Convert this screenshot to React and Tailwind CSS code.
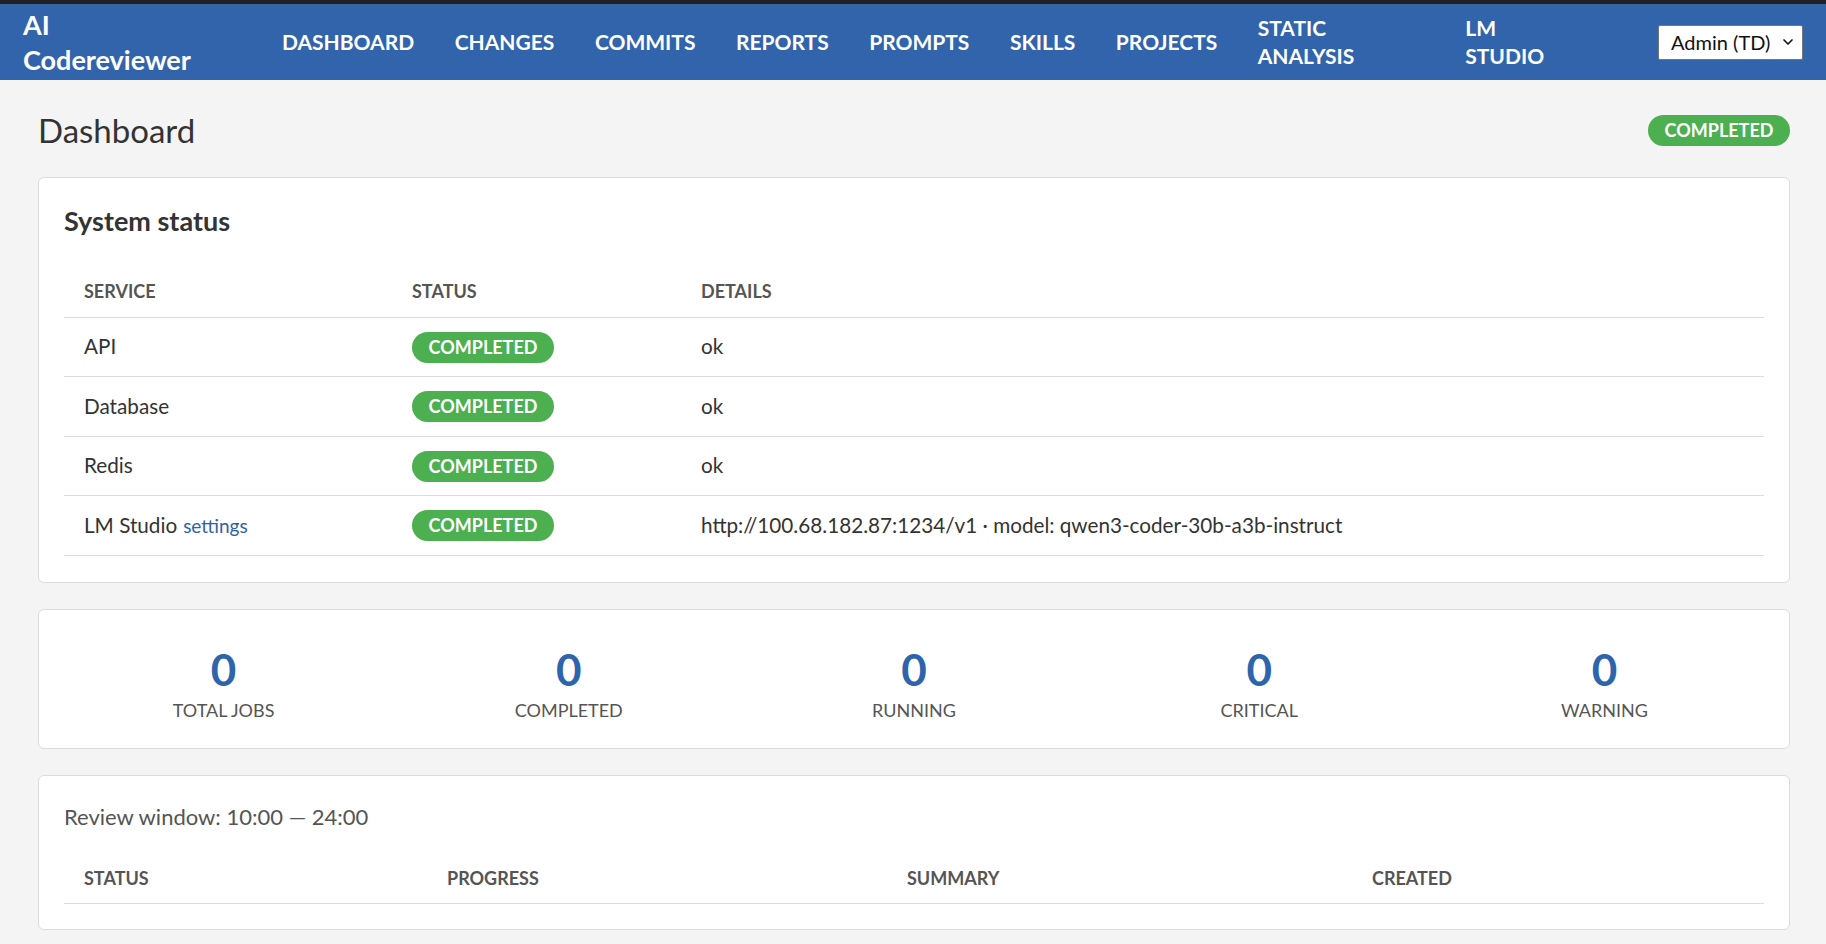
import React from 'react';
import { ChevronDown } from 'lucide-react';

const links = ['DASHBOARD', 'CHANGES', 'COMMITS', 'REPORTS', 'PROMPTS', 'SKILLS', 'PROJECTS'];

const services = [
    { name: 'API', details: 'ok' },
    { name: 'Database', details: 'ok' },
    { name: 'Redis', details: 'ok' },
    { name: 'LM Studio', settings: true, details: 'http://100.68.182.87:1234/v1 · model: qwen3-coder-30b-a3b-instruct' },
];

const stats = ['TOTAL JOBS', 'COMPLETED', 'RUNNING', 'CRITICAL', 'WARNING'];

function Badge() {
    return (
        <span className="inline-flex items-center justify-center h-[31px] w-[142px] rounded-full bg-[#4caf50] text-white text-[18px] font-bold">
            COMPLETED
        </span>
    );
}

export default function App() {
    return (
        <div className="min-h-screen bg-[#f4f4f4] font-[Lato,sans-serif] text-[#333]">
            <div className="h-[4px] bg-[#202124]"></div>

            {/* top navigation */}
            <nav className="h-[76px] bg-[#3264ab] flex items-center pl-[23px] pr-[23px] text-white">
                <div className="w-[259px] text-[27px] font-bold leading-[35px]">
                    AI<br />Codereviewer
                </div>
                <div className="flex items-center gap-[40.5px] text-[21px] font-bold leading-[28px]">
                    {links.map((l) => (
                        <a key={l} className="cursor-pointer">{l}</a>
                    ))}
                    <a className="w-[167px] cursor-pointer">STATIC<br />ANALYSIS</a>
                    <a className="w-[150px] cursor-pointer">LM<br />STUDIO</a>
                </div>
                <div className="ml-auto flex items-center justify-between h-[35px] w-[145px] bg-white border border-[#767676] rounded-[2px] pl-[12px] pr-[6px] text-[20px] text-[#111]">
                    <span>Admin (TD)</span>
                    <ChevronDown size={16} strokeWidth={2.5} />
                </div>
            </nav>

            <main className="pl-[38px] pr-[36px] pb-[15px]">
                <div className="flex items-center justify-between h-[40px] mt-[30px] mb-[27px]">
                    <h1 className="text-[33px] leading-[40px]">Dashboard</h1>
                    <Badge />
                </div>

                {/* system status */}
                <section className="bg-white border border-[#dcdcdc] rounded-[6px] px-[25px] pt-[25px] pb-[26px]">
                    <h2 className="text-[27px] font-bold leading-[35px]">System status</h2>
                    <table className="w-full mt-[29px] border-collapse">
                        <thead>
                            <tr className="h-[50px] border-b border-[#dcdcdc] text-left text-[18px] text-[#555]">
                                <th className="w-[328px] pl-[20px] font-bold">SERVICE</th>
                                <th className="w-[289px] pl-[20px] font-bold">STATUS</th>
                                <th className="pl-[20px] font-bold">DETAILS</th>
                            </tr>
                        </thead>
                        <tbody className="text-[20.7px]">
                            {services.map((s) => (
                                <tr key={s.name} className="h-[59.5px] border-b border-[#dcdcdc]">
                                    <td className="pl-[20px]">
                                        {s.name}
                                        {s.settings && <a className="ml-[6px] text-[19px] text-[#2f62a8]">settings</a>}
                                    </td>
                                    <td className="pl-[20px]"><Badge /></td>
                                    <td className="pl-[20px]">{s.details}</td>
                                </tr>
                            ))}
                        </tbody>
                    </table>
                </section>

                {/* counters */}
                <section className="mt-[26px] bg-white border border-[#dcdcdc] rounded-[6px] px-[12px] pt-[33px] pb-[25px] grid grid-cols-5">
                    {stats.map((s) => (
                        <div key={s} className="flex flex-col items-center">
                            <span className="text-[44px] font-bold leading-[53px] text-[#2e64ab]">0</span>
                            <span className="mt-[2px] text-[18px] leading-[25px] text-[#555]">{s}</span>
                        </div>
                    ))}
                </section>

                {/* review window */}
                <section className="mt-[26px] bg-white border border-[#dcdcdc] rounded-[6px] p-[25px]">
                    <p className="text-[22px] leading-[31px] text-[#555]">Review window: 10:00 — 24:00</p>
                    <table className="w-full mt-[22px] border-collapse">
                        <thead>
                            <tr className="h-[50px] border-b border-[#dcdcdc] text-left text-[18px] text-[#555]">
                                <th className="w-[363px] pl-[20px] font-bold">STATUS</th>
                                <th className="w-[460px] pl-[20px] font-bold">PROGRESS</th>
                                <th className="w-[465px] pl-[20px] font-bold">SUMMARY</th>
                                <th className="pl-[20px] font-bold">CREATED</th>
                            </tr>
                        </thead>
                    </table>
                </section>
            </main>
        </div>
    );
}
